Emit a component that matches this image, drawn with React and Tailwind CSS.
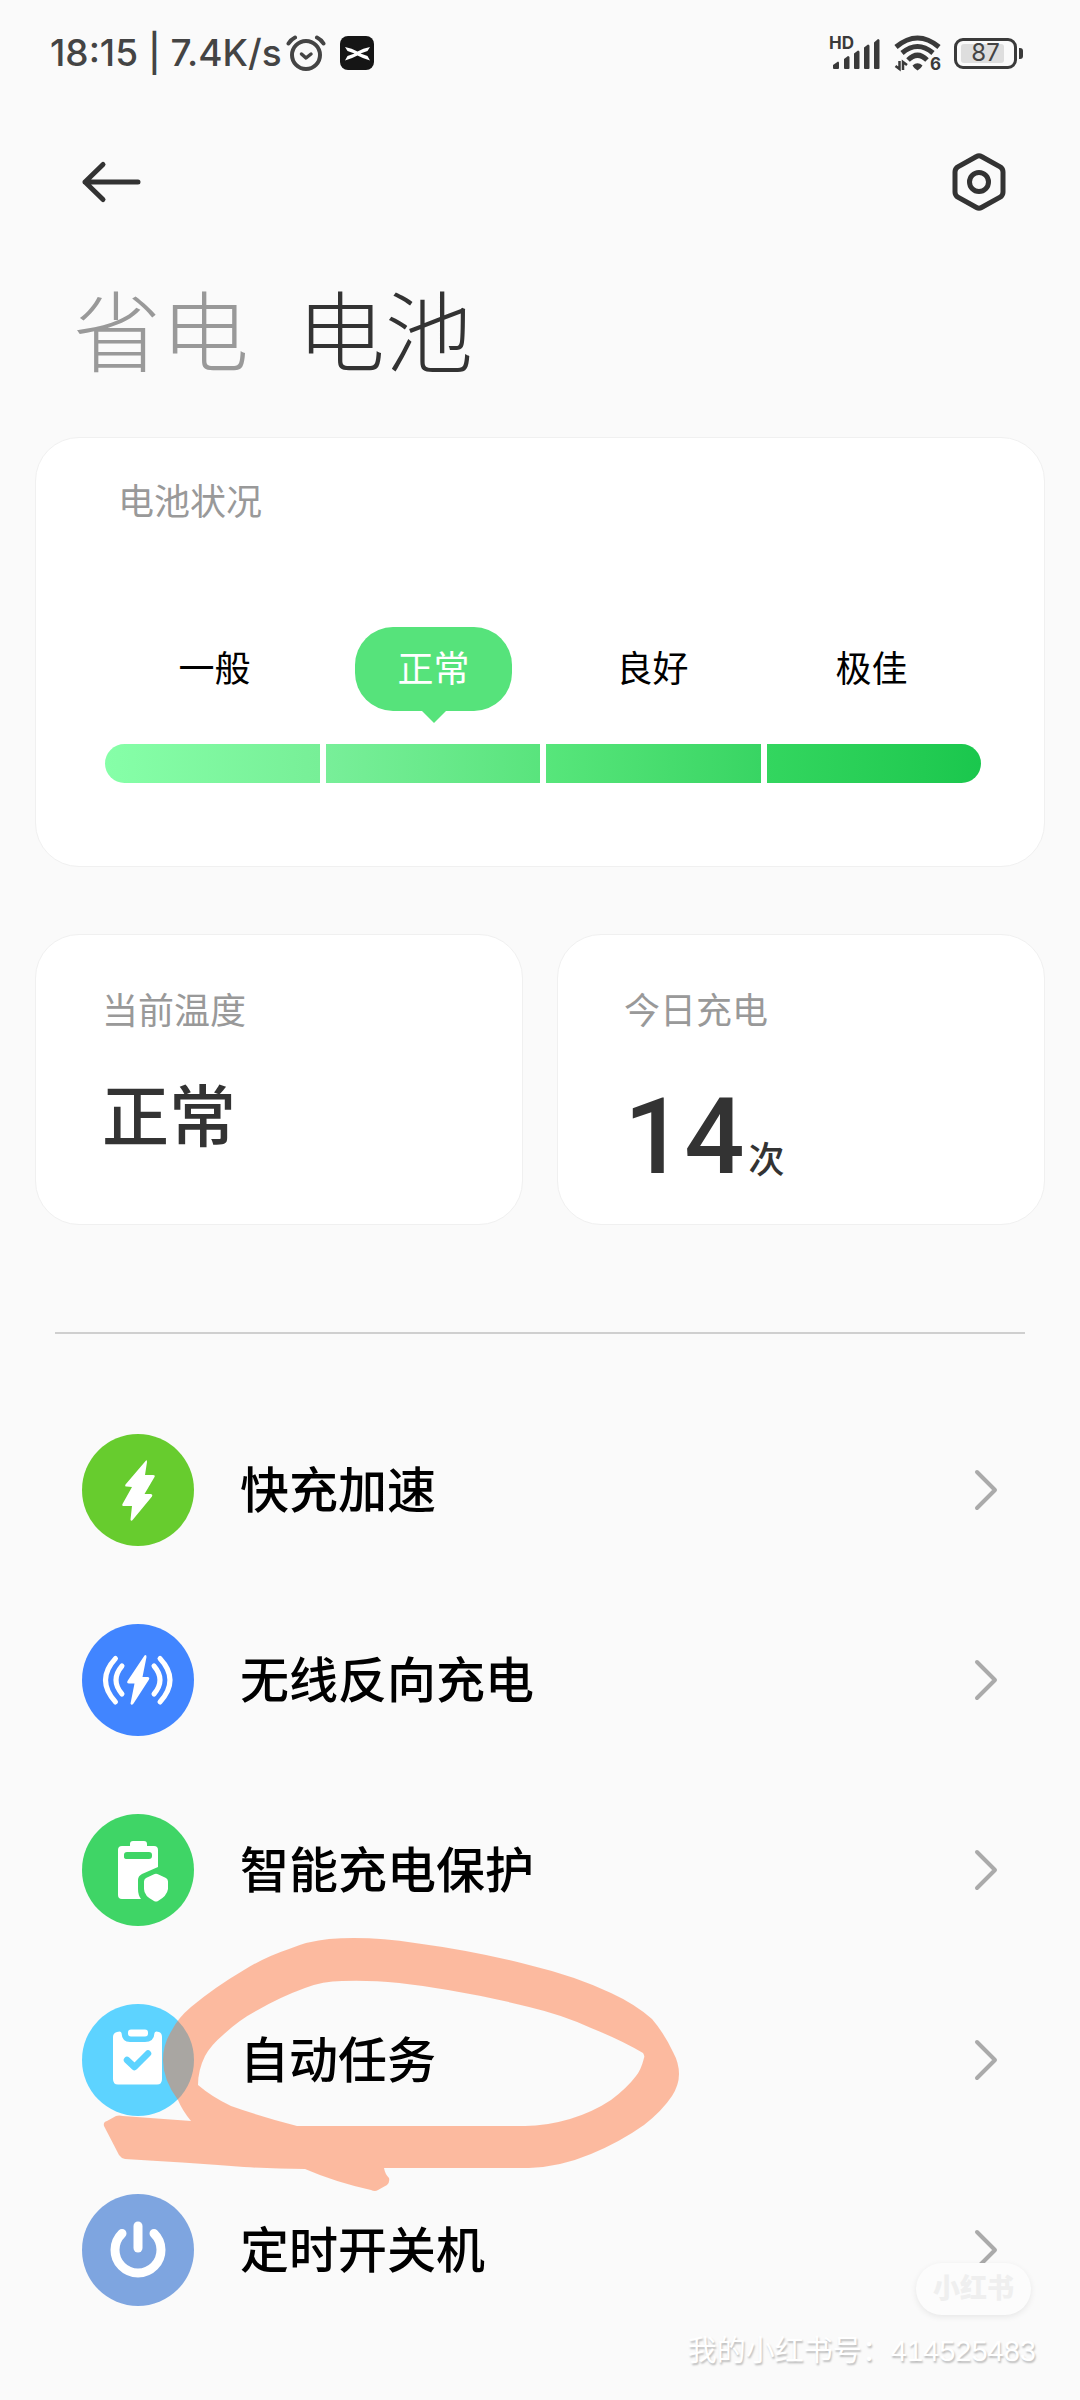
import React from "react";

const BOLT_TALL = "M64 26.5 L43.5 50.5 Q42.5 52.5 44.5 52.5 L50 53 L40.5 70 Q39.5 72 42 72 L50 72 L48.5 85.5 Q49 88 51 85.5 L70 62.5 Q71 60 68.500 60 L62.500 60 L72.500 43 Q73.500 41 71 41 L63 41 L65 28 Q65 25.500 64 26.500 Z";
const BOLT = "M62.500 31.500 L45.500 57 Q44.500 59.500 47 59.500 L52.500 59.500 L48.500 79.500 Q49.500 82 51.500 79.500 L67 55.500 Q68 53 65.500 53 L60.500 53 L64.500 33 Q64.500 30 62.500 31.500 Z";

function FastChargeIcon() {
  return <path d={BOLT_TALL} fill="#fff" />;
}

function ReverseChargeIcon() {
  return (
    <g>
      <path d={BOLT} fill="#fff" />
      <g fill="none" stroke="#fff" strokeWidth="5" strokeLinecap="round">
        <path d="M33.500 34.500 Q13.500 56 33.500 78" />
        <path d="M40 42 Q28 56 40 70" />
        <path d="M78 34.500 Q98 56 78 78" />
        <path d="M72 42 Q84 56 72 70" />
      </g>
    </g>
  );
}

function ProtectIcon() {
  return (
    <g>
      <path
        fillRule="evenodd"
        fill="#fff"
        d="M51 27 H62 Q65 27 65 30 V32 H72 Q76 32 76 36 V53 L60 60 Q56 62 56 66 V75 Q56 81 59 85 H40 Q36 85 36 81 V36 Q36 32 40 32 H48 V30 Q48 27 51 27 Z M45 38 Q42 38 42 41 V43 Q42 45 45 45 H67 Q70 45 70 42 V41 Q70 38 67 38 Z"
      />
      <path d="M71.500 60.500 Q74 59 76.500 60.500 L84 64 Q86 65 86 67.500 V75 Q85 82 76 87 Q74 88 72 87 Q62 82 62 75 V67.500 Q62 65 64 64 Z" fill="#fff" />
    </g>
  );
}

function TaskIcon() {
  return (
    <g>
      <path d="M35 28 Q39 26.500 39.500 29 Q40 38 48 38 H63 Q72 38 72.500 29 Q73 26.500 77 28 Q80 29 80 33 V75 Q80 80.500 75 80.500 H36 Q31 80.500 31 75 V33 Q31 29 35 28 Z" fill="#fff" />
      <rect x="46" y="25.500" width="20" height="7" rx="3" fill="#fff" />
      <path d="M45 56 L52.500 63 L66 49.500" fill="none" stroke="#5dd3ff" strokeWidth="6.500" strokeLinecap="round" strokeLinejoin="round" />
    </g>
  );
}

function PowerIcon() {
  return (
    <g fill="none" stroke="#fff" strokeWidth="9" strokeLinecap="round">
      <path d="M56 32 V54" />
      <path d="M40 39.500 A23 23 0 1 0 72 39.500" />
    </g>
  );
}

const ITEMS = [
  { label: "快充加速", color: "bg-[#67cc2e]", Icon: FastChargeIcon },
  { label: "无线反向充电", color: "bg-[#4185ff]", Icon: ReverseChargeIcon },
  { label: "智能充电保护", color: "bg-[#3fd566]", Icon: ProtectIcon },
  { label: "自动任务", color: "bg-[#5dd3ff]", Icon: TaskIcon, circled: true },
  { label: "定时开关机", color: "bg-[#7ea5e0]", Icon: PowerIcon },
];

const LEVELS = [
  { label: "一般", bar: "rounded-l-full from-[#86ffa8] to-[#77ef97]" },
  { label: "正常", bar: "from-[#78ef99] to-[#59e47d]", active: true },
  { label: "良好", bar: "from-[#57e67b] to-[#38d563]" },
  { label: "极佳", bar: "rounded-r-full from-[#33d65f] to-[#1ac74d]" },
];

function StatusBar() {
  return (
    <div className="flex h-[106px] items-center justify-between pr-[57px] pl-[50px] text-[#444]">
      <div className="flex items-center">
        <span className="text-[37px] leading-10 font-medium whitespace-nowrap">18:15 | 7.4K/s</span>
        <svg className="ml-1 h-9 w-10" viewBox="0 0 40 36" fill="none" stroke="#444" strokeLinecap="round" strokeLinejoin="round" aria-label="闹钟">
          <circle cx="20" cy="20" r="14" strokeWidth="4" />
          <path d="M15.500 19 L20 23 L25 19" strokeWidth="3.500" />
          <path d="M2.500 8.500 Q5 4.500 9 2.500 M37.500 8.500 Q35 4.500 31 2.500" strokeWidth="4" />
        </svg>
        <svg className="ml-[14px] h-[34px] w-[34px]" viewBox="0 0 34 34" aria-label="应用">
          <rect width="34" height="34" rx="8" fill="#151515" />
          <path d="M5 11 Q12 12 17.500 15.500 Q23 12 30 11 L27.500 15 L20.500 17.500 L27.500 20 L30 24.500 Q23 22.500 17.500 19.500 Q12 22.500 5 24.500 L7.500 20 L14.500 17.500 L7.500 15 Z" fill="#fff" />
        </svg>
      </div>
      <div className="flex items-center">
        <svg className="h-9 w-[52px] overflow-visible" viewBox="0 0 52 36" fill="#3a3a3a" aria-label="信号">
          <text x="-1" y="14" fontFamily="Inter, sans-serif" fontSize="17" fontWeight="700">HD</text>
          <path d="M3 30 L8 26.500 Q9 26.500 9 28 V33 Q9 34 8 34 H4 Q3 34 3 33 Z" />
          <path d="M14 24 L18 21 Q19.500 21 19.500 22.500 V33 Q19.500 34 18.500 34 H15 Q14 34 14 33 Z" />
          <path d="M24 18.500 L28 15.500 Q29.500 15.500 29.500 17 V33 Q29.500 34 28.500 34 H25 Q24 34 24 33 Z" />
          <path d="M34 12.500 L38 9.500 Q39.500 9.500 39.500 11 V33 Q39.500 34 38.500 34 H35 Q34 34 34 33 Z" />
          <path d="M44 7.500 L48 4 Q49.500 4 49.500 5.500 V33 Q49.500 34 48.500 34 H45 Q44 34 44 33 Z" />
        </svg>
        <svg className="ml-3 h-9 w-[48px] overflow-visible" viewBox="0 0 48 36" aria-label="无线网络">
          <g fill="none" stroke="#3a3a3a" strokeWidth="5">
            <path d="M2 12 Q23.500 -6 45 12" />
            <path d="M8 18 Q23.500 5 39 18" />
            <path d="M14 25 Q23.500 15.500 33 25" />
          </g>
          <path d="M18.500 30.500 Q23.500 26 28.500 30.500 Q27 33.500 23.500 35.500 Q20 33.500 18.500 30.500 Z" fill="#3a3a3a" />
          <path d="M1.500 31 L5.500 34 V26 M13 30 L9 27 V35" fill="none" stroke="#3a3a3a" strokeWidth="2.500" />
          <text x="36" y="35" fontFamily="Inter, sans-serif" fontSize="17" fontWeight="700" fill="#3a3a3a">6</text>
        </svg>
        <div className="ml-3 flex items-center gap-[2px]">
          <div className="relative flex h-[31px] w-[63px] items-center justify-center rounded-[9px] border-3 border-[#3a3a3a] p-[4px]">
            <div className="absolute inset-y-[3px] left-[4px] w-[43px] rounded-[3px] bg-[#dedede]" />
            <span className="relative text-2xl leading-6">87</span>
          </div>
          <div className="h-[11px] w-1 rounded-r-[3px] bg-[#3a3a3a]" />
        </div>
      </div>
    </div>
  );
}

function Annotation() {
  return (
    <svg className="pointer-events-none absolute -top-[30px] left-[100px] h-[260px] w-[584px]" viewBox="100 1935 584 260" aria-hidden="true">
      <path
        fillRule="evenodd"
        fill="#ff723a"
        fillOpacity="0.47"
        d="M104 2126 Q103 2122 107 2121 L116 2116 Q119 2115 123 2116 L191 2121 Q182 2110 178 2100 Q163 2080 163 2060 Q163 2044 172 2030 Q178 2018 191 2007 Q215 1987 244 1970 Q265 1957 289 1949 Q308 1941 329 1939 Q370 1936 415 1943 Q475 1951 529 1965 Q575 1976 611 1993 Q635 2004 652 2019 Q664 2033 673 2052 Q679 2063 679 2074 Q679 2085 672 2096 Q662 2111 644 2125 Q620 2142 591 2154 Q560 2167 529 2168 L384 2168 Q385 2174 389 2178 Q390 2182 387 2185 L378 2190 Q375 2192 371 2190 Q335 2182 305 2169 Q275 2169 244 2167 Q180 2162 125 2159 Q121 2158 119 2155 Z M198 2085 Q198 2070 205 2056 Q211 2045 223 2035 Q239 2020 256 2011 Q280 1997 305 1988 Q323 1981 342 1981 Q387 1979 448 1990 Q490 1997 529 2007 Q563 2015 591 2028 Q621 2040 643 2053 Q645 2056 644 2058 Q641 2070 636 2076 Q627 2088 611 2100 Q593 2112 570 2119 Q546 2126 525 2126 L297 2126 Q262 2117 231 2106 Q212 2097 198 2085 Z"
      />
    </svg>
  );
}

export default function App() {
  return (
    <main className="relative min-h-screen bg-[#fafafa] font-['Inter','Noto_Sans_CJK_SC',sans-serif] text-[#333]">
      <StatusBar />

      <header className="flex h-[152px] items-center justify-between px-[72px]">
        <button type="button" aria-label="返回" className="flex h-20 w-20 items-center">
          <svg className="h-12 w-20" viewBox="0 0 80 48" fill="none" stroke="#333" strokeWidth="5" strokeLinecap="round" strokeLinejoin="round">
            <path d="M31 6.500 L13 24 L31 41.500 M13 24 H66" />
          </svg>
        </button>
        <button type="button" aria-label="设置" className="flex h-20 w-[58px] items-center justify-center">
          <svg className="h-[60px] w-14" viewBox="0 0 56 60" fill="none" stroke="#333" strokeWidth="5">
            <path d="M25.500 4.500 Q28 3 30.500 4.500 L49.500 15 Q52 17 52 20 V40 Q52 43 49.500 45 L30.500 55.500 Q28 57 25.500 55.500 L6.500 45 Q4 43 4 40 V20 Q4 17 6.500 15 Z" />
            <circle cx="28" cy="30" r="9.500" />
          </svg>
        </button>
      </header>

      <nav className="flex h-[150px] items-center gap-12 px-[73px] text-[88px] leading-[96px] font-light">
        <button type="button" className="text-[#999]">省电</button>
        <button type="button" aria-current="page">电池</button>
      </nav>

      <div className="mt-[29px] px-[35px]">
        <section className="rounded-[44px] border border-[#f0f0f0] bg-white pt-[44px] pr-[63px] pb-[83px] pl-[69px]">
          <h2 className="px-[13px] text-4xl leading-10 text-[#999]">电池状况</h2>
          <div className="mt-[105px] grid grid-cols-4 text-4xl leading-10 text-black">
            {LEVELS.map((level) => (
              <div key={level.label} className="flex justify-center">
                {level.active ? (
                  <div className="relative flex h-[84px] w-[157px] items-center justify-center rounded-[38px] bg-[#56e37b] text-white">
                    {level.label}
                    <svg className="absolute top-full h-3 w-6" viewBox="0 0 24 12" fill="#56e37b" aria-hidden="true">
                      <path d="M0 0 H24 L12 12 Z" />
                    </svg>
                  </div>
                ) : (
                  <div className="flex h-[84px] items-center">{level.label}</div>
                )}
              </div>
            ))}
          </div>
          <div className="mt-[33px] grid h-[39px] grid-cols-4 gap-[6px]">
            {LEVELS.map((level) => (
              <div key={level.label} className={`bg-linear-to-r ${level.bar}`} />
            ))}
          </div>
        </section>

        <div className="mt-[67px] grid grid-cols-2 gap-[34px]">
          <section className="min-h-[291px] rounded-[44px] border border-[#f0f0f0] bg-white px-[66px] pt-[56px]">
            <h2 className="text-4xl leading-10 text-[#999]">当前温度</h2>
            <p className="mt-[46px] text-[67px] leading-[80px] font-medium">正常</p>
          </section>
          <section className="min-h-[291px] rounded-[44px] border border-[#f0f0f0] bg-white px-[66px] pt-[56px]">
            <h2 className="text-4xl leading-10 text-[#999]">今日充电</h2>
            <p className="mt-[46px] flex items-baseline gap-1 font-medium">
              <span className="font-['Roboto',sans-serif] text-[106px] leading-[120px]">14</span>
              <span className="text-4xl">次</span>
            </p>
          </section>
        </div>
      </div>

      <hr className="mx-[55px] mt-[107px] border-t-2 border-[#cfcfcf]" />

      <ul className="mt-[61px]">
        {ITEMS.map(({ label, color, Icon, circled }) => (
          <li key={label} className="relative">
            <a href="#" className="flex h-[190px] items-center pr-[82px] pl-[82px]">
              <span className={`h-28 w-28 shrink-0 rounded-full ${color}`}>
                <svg className="h-28 w-28" viewBox="0 0 112 112" aria-hidden="true">
                  <Icon />
                </svg>
              </span>
              <span className="ml-[46px] flex-1 pt-[2px] text-[49px] leading-[60px] font-medium text-black">{label}</span>
              <svg className="h-11 w-6" viewBox="0 0 24 44" fill="none" stroke="#aaa" strokeWidth="4" strokeLinecap="round" strokeLinejoin="round" aria-hidden="true">
                <path d="M3 4 L21 22 L3 40" />
              </svg>
            </a>
            {circled && <Annotation />}
          </li>
        ))}
      </ul>

      <div className="pointer-events-none absolute right-[44px] bottom-[31px] flex flex-col items-end gap-[18px]">
        <span className="mr-[5px] flex h-[52px] w-[115px] items-center justify-center rounded-full bg-[#fcfcfc] text-[27px] leading-8 font-black text-[#efefef] shadow-[0_2px_6px_rgba(0,0,0,0.08)]">小红书</span>
        <span className="font-['Liberation_Sans','Noto_Sans_CJK_SC',sans-serif] text-[29px] leading-9 whitespace-nowrap text-white [text-shadow:1px_2px_2px_rgba(0,0,0,0.25)]">我的小红书号：414525483</span>
      </div>
    </main>
  );
}
